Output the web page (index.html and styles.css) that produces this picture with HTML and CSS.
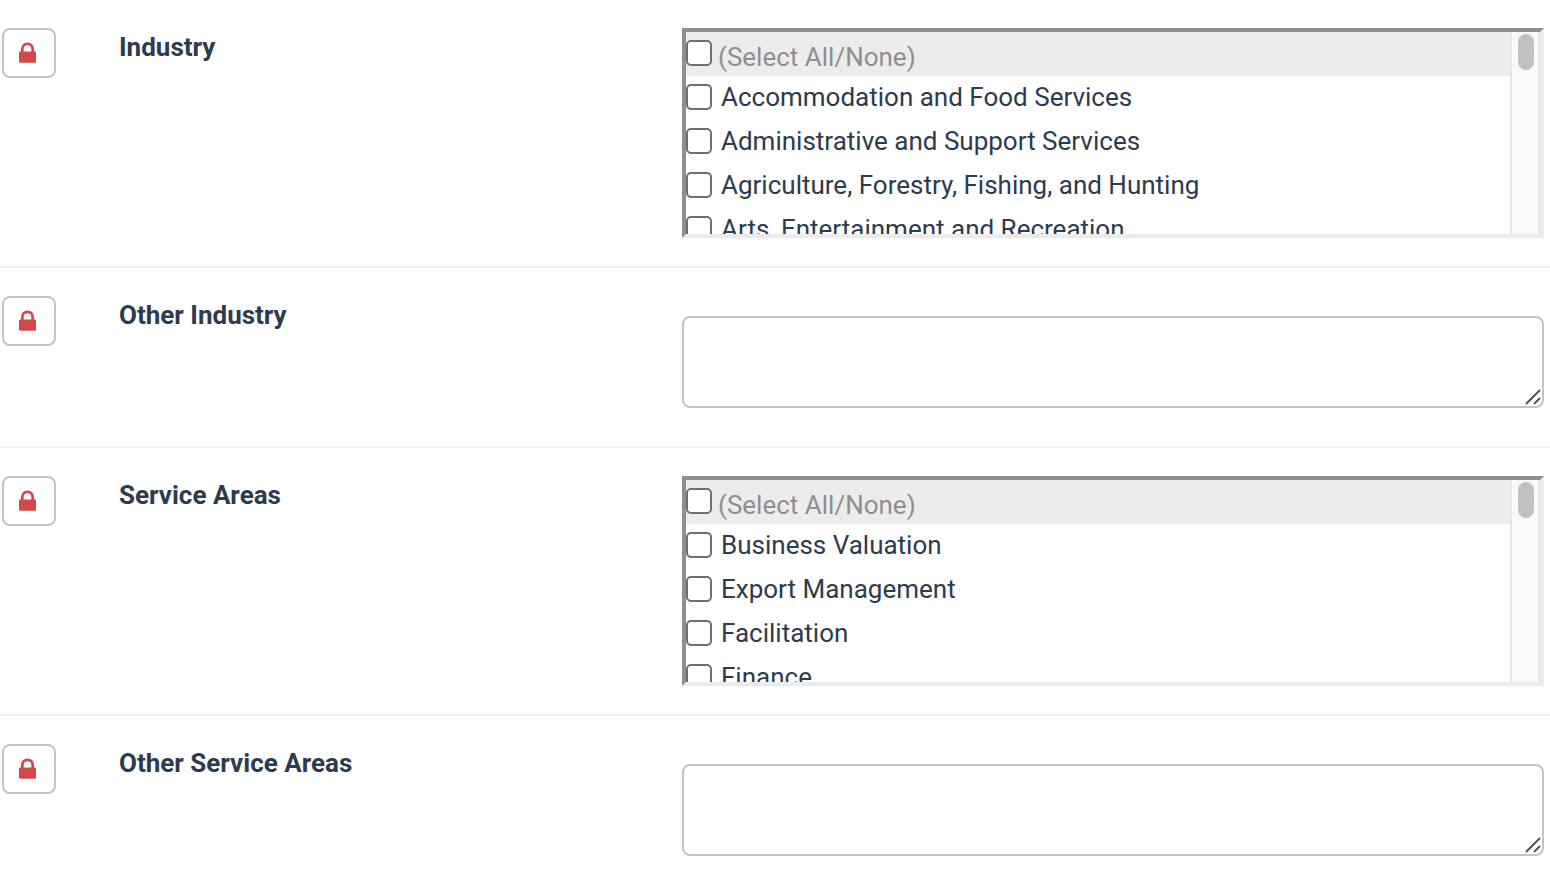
FILE: index.html
```html
<!DOCTYPE html>
<html lang="en">
<head>
<meta charset="utf-8">
<title>Industry and Service Areas</title>
<link rel="stylesheet" href="styles.css">
</head>
<body>
<svg class="defs" aria-hidden="true">
  <symbol id="lock" viewBox="0 0 17 21">
    <path fill-rule="evenodd" d="M1.900 9.500V7a6.600 6.600 0 0 1 13.200 0V9.500h.6a1.300 1.300 0 0 1 1.300 1.300v8.700a1.300 1.300 0 0 1-1.300 1.300H1.300A1.300 1.300 0 0 1 0 19.500v-8.700A1.300 1.300 0 0 1 1.300 9.500zM4.700 9.500h7.600V7a3.800 3.800 0 0 0-7.600 0z"/>
  </symbol>
  <symbol id="grip" viewBox="0 0 16 16">
    <path d="M1 15 15 1M9 15l6-6"/>
  </symbol>
</svg>
<form class="form">
  <div class="row">
    <button class="lock" type="button" aria-label="Lock Industry"><svg><use href="#lock"/></svg></button>
    <span class="label" id="industry">Industry</span>
    <div class="picker" role="group" aria-labelledby="industry">
      <div class="options">
        <label class="option all"><input type="checkbox"><span>(Select All/None)</span></label>
        <label class="option"><input type="checkbox"><span>Accommodation and Food Services</span></label>
        <label class="option"><input type="checkbox"><span>Administrative and Support Services</span></label>
        <label class="option"><input type="checkbox"><span>Agriculture, Forestry, Fishing, and Hunting</span></label>
        <label class="option"><input type="checkbox"><span>Arts, Entertainment and Recreation</span></label>
      </div>
      <div class="track"><div class="thumb"></div></div>
    </div>
  </div>
  <div class="row">
    <button class="lock" type="button" aria-label="Lock Other Industry"><svg><use href="#lock"/></svg></button>
    <label class="label" for="other-industry">Other Industry</label>
    <div class="field"><textarea id="other-industry"></textarea><svg class="grip"><use href="#grip"/></svg></div>
  </div>
  <div class="row">
    <button class="lock" type="button" aria-label="Lock Service Areas"><svg><use href="#lock"/></svg></button>
    <span class="label" id="areas">Service Areas</span>
    <div class="picker" role="group" aria-labelledby="areas">
      <div class="options">
        <label class="option all"><input type="checkbox"><span>(Select All/None)</span></label>
        <label class="option"><input type="checkbox"><span>Business Valuation</span></label>
        <label class="option"><input type="checkbox"><span>Export Management</span></label>
        <label class="option"><input type="checkbox"><span>Facilitation</span></label>
        <label class="option"><input type="checkbox"><span>Finance</span></label>
      </div>
      <div class="track"><div class="thumb"></div></div>
    </div>
  </div>
  <div class="row">
    <button class="lock" type="button" aria-label="Lock Other Service Areas"><svg><use href="#lock"/></svg></button>
    <label class="label" for="other-areas">Other Service Areas</label>
    <div class="field"><textarea id="other-areas"></textarea><svg class="grip"><use href="#grip"/></svg></div>
  </div>
</form>
</body>
</html>
```

FILE: styles.css
```css
* { box-sizing: border-box; }

body {
  margin: 0;
  background: #fff;
  color: #2c3b4d;
  font: 26px/38px Roboto, "Liberation Sans", sans-serif;
}

.defs { display: none; }

.row {
  display: grid;
  grid-template-columns: 117px 563fr 862fr;
  align-items: start;
  padding: 28px 6px 28px 2px;
  border-bottom: 2px solid #f1f1f1;
}

.row:last-child {
  padding-bottom: 0;
  border-bottom: 0;
}

.lock {
  display: flex;
  align-items: center;
  width: 54px;
  height: 50px;
  padding: 0 0 2px 15px;
  border: 2px solid #c4c4c4;
  border-radius: 8px;
  background: #fff;
}

.lock svg {
  width: 17px;
  height: 21px;
  fill: #d14949;
}

.label { font-weight: 700; }

.picker {
  display: flex;
  min-width: 0;
  height: 210px;
  border: 4px solid;
  border-color: #8f8f8f #ebebeb #ebebeb #8f8f8f;
}

.options {
  flex: 1;
  min-width: 0;
  overflow-y: auto;
  scrollbar-width: none;
}

.option {
  display: flex;
  align-items: center;
  gap: 9px;
  height: 44px;
}

.option span { padding-bottom: 2px; }

.option input {
  appearance: none;
  flex: none;
  width: 26px;
  height: 26px;
  margin: 0 0 2px;
  border: 2px solid #6f6f6f;
  border-radius: 5px;
  background: #fff;
}

.all {
  gap: 6px;
  background: #ececec;
  color: #8f8f8f;
}

.all span { padding: 6px 0 0; }

.track {
  width: 30px;
  padding: 2px 4px 2px 6px;
  border: solid #e6e6e6;
  border-width: 0 2px;
  background: #f9f9f9;
}

.thumb {
  width: 16px;
  height: 36px;
  border-radius: 8px;
  background: #c1c1c1;
}

.field {
  position: relative;
  padding: 20px 0 10px;
}

.field textarea {
  display: block;
  width: 100%;
  height: 92px;
  padding: 8px;
  border: 2px solid #c4c4c4;
  border-radius: 8px;
  background: #fff;
  color: inherit;
  font: inherit;
  resize: none;
}

.grip {
  position: absolute;
  right: 3px;
  bottom: 13px;
  width: 16px;
  height: 16px;
  fill: none;
  stroke: #555;
  stroke-width: 2;
  pointer-events: none;
}
```
